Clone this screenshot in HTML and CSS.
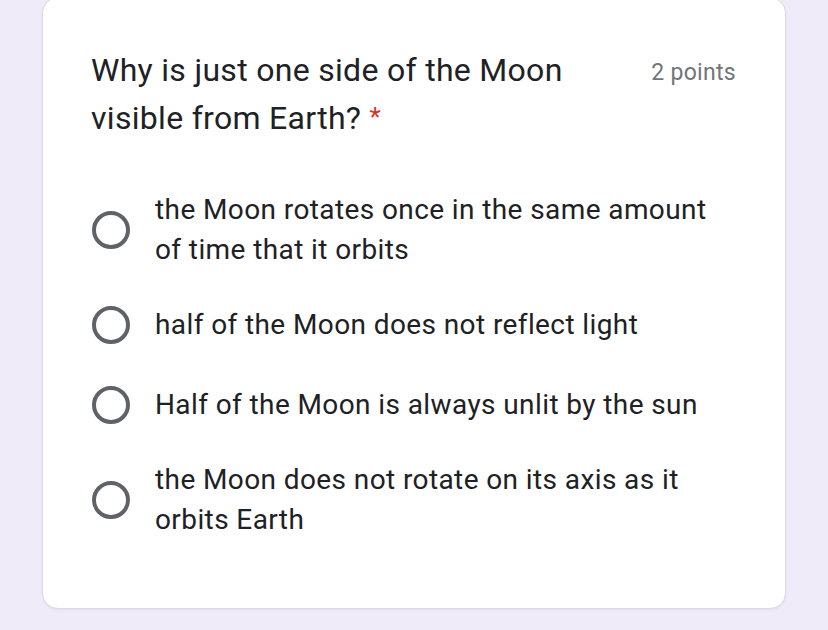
FILE: index.html
```html
<!DOCTYPE html>
<html>
<head>
<meta charset="utf-8">
<link rel="stylesheet" href="styles.css">
</head>
<body>
<div class="card">
  <div class="header">
    <div class="title">Why is just one side of the Moon visible from Earth? <span class="req">*</span></div>
    <div class="points">2 points</div>
  </div>
  <div class="options">
    <div class="option"><span class="radio-box"><span class="radio"></span></span><span class="label">the Moon rotates once in the same amount of time that it orbits</span></div>
    <div class="option"><span class="radio-box"><span class="radio"></span></span><span class="label">half of the Moon does not reflect light</span></div>
    <div class="option"><span class="radio-box"><span class="radio"></span></span><span class="label">Half of the Moon is always unlit by the sun</span></div>
    <div class="option"><span class="radio-box"><span class="radio"></span></span><span class="label">the Moon does not rotate on its axis as it orbits Earth</span></div>
  </div>
</div>
</body>
</html>
```
FILE: styles.css
```css
html, body {
  margin: 0;
  padding: 0;
  background: #f0ebf8;
  height: 100%;
  overflow: hidden;
}
body {
  padding: 0 42px;
  font-family: Roboto, "Liberation Sans", sans-serif;
}
.card {
  margin-top: -3px;
  background: #fff;
  border: 1px solid #dadce0;
  border-radius: 16px;
  padding: 48px 49px 68px 48px;
  box-shadow: 0 1px 2px rgba(60, 64, 67, 0.08);
}
.header {
  display: flex;
  justify-content: space-between;
  align-items: flex-start;
}
.title {
  width: 510px;
  font-size: 32px;
  line-height: 48px;
  color: #202124;
  letter-spacing: 0.3px;
}
.req {
  color: #d93025;
  font-size: 26px;
  line-height: 1;
  vertical-align: 3px;
}
.points {
  font-size: 23px;
  line-height: 48px;
  color: #70757a;
  margin-top: 3px;
  letter-spacing: 0.3px;
}
.options {
  margin-top: 48px;
  display: flex;
  flex-direction: column;
  gap: 30px;
}
.option {
  display: flex;
  align-items: center;
  min-height: 50px;
  gap: 24px;
}
.radio-box {
  flex: none;
  width: 40px;
  height: 40px;
  display: flex;
  align-items: center;
  justify-content: center;
}
.radio {
  width: 30px;
  height: 30px;
  border: 4px solid #5f6368;
  border-radius: 50%;
}
.label {
  flex: 1;
  font-size: 28px;
  line-height: 40px;
  color: #202124;
  letter-spacing: 0.4px;
}
```
